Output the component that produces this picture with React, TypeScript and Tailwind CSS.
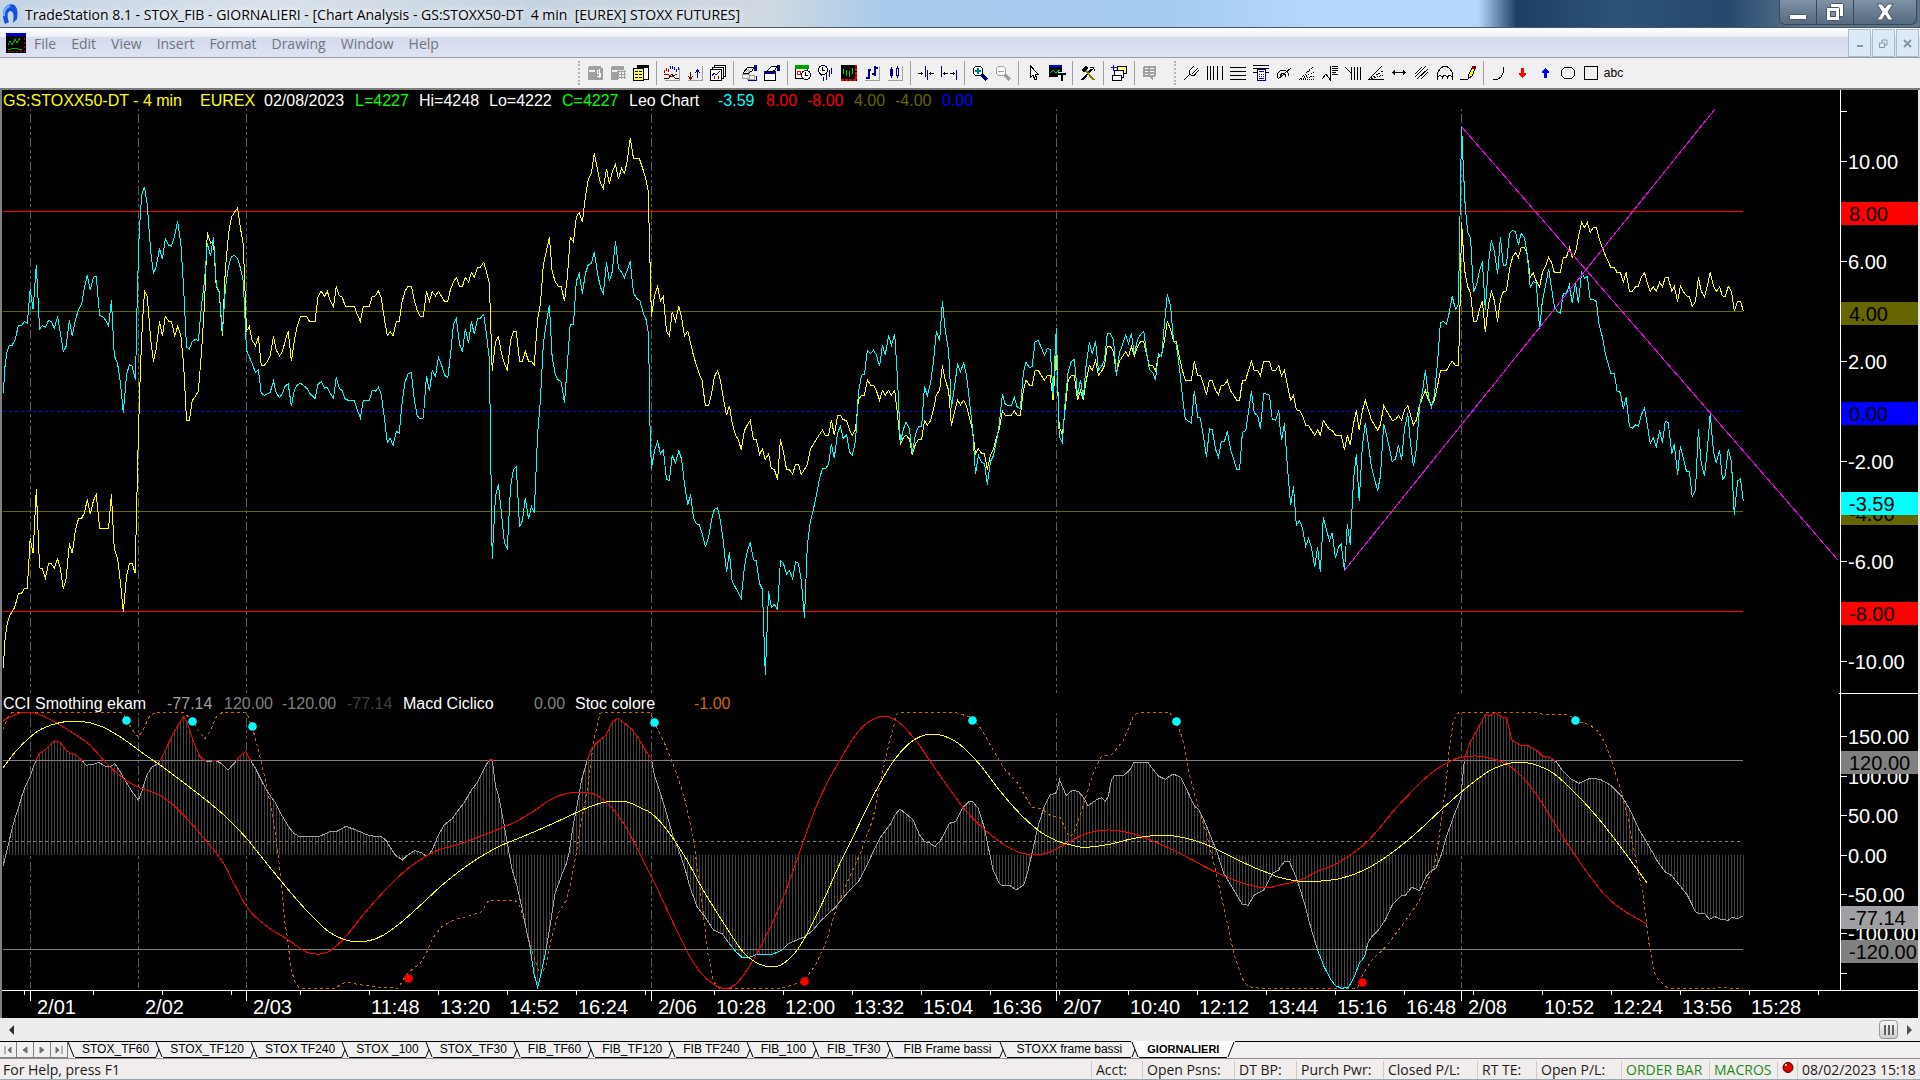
import type { ReactNode } from "react";

type Point = [number, number];

// Digitised samples come in three 640px wide sections, each on a 1568 unit grid.
const SECTION = 640;
const GRID_X = 2.45;

function read(sections: string[], top: number, gridY: number): Point[] {
    return sections.flatMap((section, i) =>
        section.trim().split(/\s+/).map((pair) => {
            const [x, y] = pair.split(",").map(Number);
            return [i * SECTION + x / GRID_X, top + y / gridY] as Point;
        })
    );
}

const toPoints = (points: Point[]) => points.map(([x, y]) => `${x.toFixed(1)},${y.toFixed(1)}`).join(" ");

// rounds the corners of sparse samples for the slow oscillators
function smooth(points: Point[]) {
    let d = `M${points[0][0]} ${points[0][1]}`;
    for (let i = 0; i < points.length - 1; i++) {
        const p0 = points[i - 1] ?? points[i];
        const p1 = points[i];
        const p2 = points[i + 1];
        const p3 = points[i + 2] ?? p2;
        d += `C${p1[0] + (p2[0] - p0[0]) / 6} ${p1[1] + (p2[1] - p0[1]) / 6} ${p2[0] - (p3[0] - p1[0]) / 6} ${p2[1] - (p3[1] - p1[1]) / 6} ${p2[0]} ${p2[1]}`;
    }
    return d;
}

const leoYellow = read([
    `8,1510 12,1440 17,1400 23,1375 30,1363 36,1352 45,1316 53,1315 60,1302 67,1302 74,1172 81,1211 89,1044 97,1249 104,1251 111,1276 119,1238 126,1238 133,1250 141,1225 148,1250 155,1303 162,1278 170,1185 177,1211 185,1150 192,1121 200,1119 207,1105 214,1070 221,1108 229,1073 236,1057 244,1145 266,1145 273,1057 280,1200 288,1225 295,1285 302,1365 310,1272 317,1238 324,1238 331,1262 339,900 344,730 349,610 354,526 361,540 369,650 376,710 383,675 391,605 398,643 405,592 413,604 420,604 428,643 435,618 443,640 450,720 457,863 464,863 471,812 479,800 486,787 494,680 501,560 508,372 516,400 523,395 530,515 537,527 545,643 552,470 560,375 567,333 574,320 582,308 589,360 596,405 604,630 611,618 618,655 626,668 633,644 640,719 648,719 655,710 662,695 670,644 677,680 685,695 692,684 699,655 706,631 714,709 721,655 728,618 736,592 751,592 758,604 772,604 779,540 787,526 795,539 802,526 809,550 817,566 824,513 831,538 838,540 846,565 868,565 875,585 883,605 890,566 905,566 912,540 920,538 927,525 934,543 942,600 949,642 956,631 963,642 971,605 978,604 985,555 992,526 1000,513 1008,513 1015,550 1022,575 1029,591 1037,591 1045,526 1052,553 1059,527 1067,538 1074,526 1082,539 1089,552 1097,552 1104,520 1111,502 1118,490 1126,513 1133,513 1140,490 1148,502 1155,477 1162,489 1170,464 1177,463 1185,450 1192,475 1199,505 1206,733 1214,658 1221,645 1229,690 1236,715 1243,733 1251,655 1258,631 1265,631 1273,709 1280,709 1287,683 1295,709 1302,709 1309,719 1317,600 1324,560 1331,458 1339,420 1346,385 1353,475 1361,502 1368,513 1375,513 1383,552 1390,490 1397,385 1405,397 1412,332 1419,320 1427,346 1434,280 1441,235 1449,218 1456,166 1464,210 1471,243 1478,258 1486,206 1493,245 1500,215 1508,193 1515,232 1523,205 1530,218 1537,185 1544,126 1552,179 1566,179`,
    `0,184 8,210 15,235 20,265 24,430 28,592 36,535 43,513 50,552 57,540 65,630 72,643 79,580 87,604 95,565 102,595 109,643 117,630 131,694 145,742 152,758 160,824 168,824 175,795 182,750 190,733 197,758 204,805 212,850 219,825 226,870 234,902 241,914 248,940 256,890 263,875 270,864 278,913 285,914 293,952 300,938 307,966 315,951 322,990 329,991 337,1018 344,913 351,944 359,991 366,992 374,1004 381,978 388,978 395,1004 403,992 410,978 417,940 425,925 432,913 447,889 454,902 462,902 469,863 476,902 484,850 491,850 498,862 506,863 513,887 520,902 528,888 535,810 543,797 550,797 557,758 565,771 572,771 579,785 587,811 594,785 601,797 609,785 616,797 624,785 631,850 638,926 645,909 652,902 660,912 667,953 675,925 682,914 690,914 697,864 704,876 712,864 719,835 726,797 734,785 741,720 748,758 756,785 763,877 770,842 778,811 785,823 793,811 800,825 807,855 815,892 822,951 829,938 837,950 844,951 851,992 859,953 866,938 873,910 880,888 888,838 895,850 910,850 917,838 924,850 932,850 939,785 946,758 954,771 961,771 968,733 976,733 983,746 991,758 998,747 1005,747 1012,811 1020,683 1027,880 1035,901 1042,830 1049,758 1057,747 1064,747 1072,811 1079,785 1086,811 1093,760 1101,720 1108,733 1116,708 1123,745 1131,735 1138,720 1145,670 1152,670 1160,683 1167,742 1175,708 1182,697 1190,684 1197,696 1204,670 1211,696 1219,670 1226,658 1234,658 1241,690 1248,720 1256,720 1263,733 1270,696 1278,694 1285,655 1292,605 1300,625 1307,657 1314,658 1322,700 1329,733 1336,758 1351,758 1358,709 1366,745 1373,746 1381,772 1388,797 1395,759 1402,759 1410,784 1417,797 1424,772 1432,771 1439,759 1447,786 1454,797 1462,811 1469,811 1476,760 1484,758 1491,732 1498,709 1505,733 1513,733 1520,746 1528,709 1542,709 1549,733 1557,733 1565,720`,
    `0,733 4,746 11,733 18,770 26,811 33,798 40,836 48,838 55,850 63,876 70,877 85,902 92,888 99,902 106,863 121,888 128,889 136,902 150,902 158,940 165,902 172,927 180,873 187,837 194,889 202,838 209,811 217,838 224,862 239,889 246,875 254,825 261,838 275,863 283,862 290,850 298,863 305,836 313,825 320,850 327,876 334,862 342,823 349,805 356,785 364,811 371,825 378,810 386,773 393,733 408,733 415,719 422,709 430,720 437,720 440,620 445,346 452,470 460,515 467,530 474,605 482,605 488,575 496,552 503,631 511,560 518,526 525,550 533,605 540,548 547,527 555,525 562,470 570,436 577,425 584,438 591,411 599,411 606,430 613,490 620,477 628,500 636,514 643,477 651,460 658,438 665,450 672,477 687,477 694,437 702,437 709,411 716,437 724,425 731,385 739,346 746,359 753,346 760,372 768,359 775,359 782,390 790,412 797,432 811,464 819,464 826,477 834,477 841,502 848,477 856,526 863,526 871,514 878,513 885,490 893,477 900,505 907,526 914,514 922,526 930,502 937,514 944,490 951,490 960,526 966,513 974,553 981,513 988,527 996,538 1003,540 1010,566 1018,553 1025,490 1032,526 1040,540 1047,513 1054,477 1062,513 1069,526 1077,515 1084,538 1091,540 1098,513 1106,526 1113,577 1121,552 1128,552 1135,577`,
], 90, 2.6133);

const leoCyan = read([
    `8,792 12,725 17,685 23,667 30,667 37,652 45,616 53,615 60,605 67,610 74,520 81,573 89,458 97,624 104,616 111,620 119,602 126,606 133,623 141,592 148,635 155,684 162,670 170,602 177,642 185,600 192,575 200,560 207,515 214,484 221,522 229,489 236,487 244,589 251,592 258,600 266,617 273,550 280,695 288,715 295,765 302,843 310,745 317,717 324,722 332,758 336,560 340,400 344,320 348,272 354,253 361,300 369,420 376,480 383,460 391,414 398,442 405,389 413,406 420,408 428,380 435,344 443,400 450,520 457,672 464,677 471,657 479,652 486,655 494,560 501,500 508,400 516,433 523,383 530,510 537,527 545,635 552,520 560,460 567,436 574,432 582,440 589,465 596,500 604,680 611,698 618,715 626,738 633,731 640,792 648,798 662,790 670,761 677,793 685,804 692,793 699,773 706,768 714,826 721,785 728,772 736,766 751,778 758,791 772,806 779,769 787,762 795,779 802,777 809,792 817,806 824,751 831,779 838,785 846,808 853,811 868,812 875,835 883,857 890,812 905,811 912,785 920,787 927,777 934,795 942,860 949,922 956,910 963,929 971,892 978,897 985,820 992,765 1000,740 1008,739 1015,810 1022,850 1029,860 1037,857 1045,747 1052,787 1059,734 1067,748 1074,699 1082,719 1089,745 1097,752 1104,690 1111,612 1118,598 1126,665 1133,684 1140,624 1148,662 1155,605 1162,638 1170,596 1177,597 1185,586 1192,640 1199,705 1206,1225 1214,1060 1221,1031 1229,1110 1236,1185 1243,1199 1251,1035 1258,992 1265,985 1273,1143 1280,1125 1287,1066 1295,1122 1302,1088 1309,1104 1317,900 1324,810 1331,665 1339,605 1346,562 1353,700 1361,745 1368,758 1375,763 1383,817 1390,720 1397,612 1405,612 1412,500 1419,480 1427,532 1434,480 1441,457 1449,453 1456,424 1464,480 1471,515 1478,532 1486,450 1493,500 1500,475 1508,396 1515,465 1523,477 1530,490 1537,470 1544,448 1552,530 1560,545 1566,549`,
    `0,551 8,583 15,600 21,640 24,860 28,990 36,940 43,917 50,951 57,940 65,1017 72,1021 79,956 87,974 95,943 102,965 109,1030 117,1085 124,1057 131,1118 138,1133 145,1136 152,1157 160,1193 168,1170 175,1125 182,1096 190,1092 197,1125 204,1180 212,1260 219,1208 226,1285 234,1300 248,1328 256,1245 263,1205 270,1182 278,1228 285,1230 293,1290 300,1305 307,1529 315,1310 322,1353 329,1344 337,1357 344,1230 351,1236 359,1265 366,1256 374,1277 381,1233 388,1236 395,1280 403,1379 410,1190 417,1130 425,1095 432,1060 440,1015 447,990 454,990 462,978 469,924 476,962 484,895 491,880 498,911 506,900 513,945 520,955 528,918 535,790 543,745 550,743 557,680 565,688 572,680 579,692 587,722 594,668 601,692 609,641 616,667 624,638 631,760 638,923 645,887 652,868 660,885 667,948 675,900 682,880 690,880 697,775 704,799 712,765 719,710 726,631 734,655 741,552 748,630 756,680 763,830 770,780 778,715 785,736 793,714 800,745 807,810 815,890 822,1003 829,955 837,973 844,976 851,1031 859,970 866,955 873,920 880,875 888,795 895,822 903,825 910,825 917,803 924,828 932,833 939,740 946,711 954,726 961,722 968,657 976,655 983,673 991,693 998,676 1005,678 1012,798 1020,622 1027,905 1035,921 1042,810 1049,735 1057,709 1064,704 1072,800 1079,757 1086,805 1093,720 1101,660 1108,690 1116,657 1123,732 1131,722 1138,706 1145,636 1152,637 1160,652 1167,746 1175,685 1182,667 1190,640 1197,662 1204,636 1211,690 1219,652 1226,640 1234,630 1241,685 1248,731 1256,738 1263,758 1270,690 1278,697 1285,610 1292,534 1300,565 1307,655 1314,665 1322,730 1329,800 1336,860 1351,870 1358,786 1366,855 1373,858 1381,910 1388,960 1395,886 1402,888 1410,938 1417,960 1424,920 1432,918 1439,892 1447,940 1454,963 1462,992 1469,992 1476,895 1484,890 1491,840 1498,786 1505,845 1513,850 1520,886 1528,793 1542,797 1549,860 1557,863 1565,837`,
    `0,880 4,915 11,870 18,980 26,1085 33,1036 40,1137 48,1125 55,1145 63,1192 70,1172 77,1195 85,1246 92,1194 99,1260 106,1117 121,1178 128,1157 136,1224 143,1195 150,1187 158,1258 165,1133 172,1188 180,1020 187,951 194,1074 202,930 209,870 217,930 224,985 239,1047 246,1010 254,873 261,900 275,971 283,964 290,929 298,967 305,885 313,845 320,925 327,983 334,940 342,825 349,790 356,733 364,803 371,830 378,800 386,710 393,608 400,605 408,612 415,580 422,539 430,573 437,560 441,330 445,95 449,200 454,310 460,372 467,388 474,528 482,508 488,475 496,448 503,574 511,450 518,393 525,420 533,482 540,385 547,460 555,456 562,375 570,367 577,370 584,405 591,375 599,386 606,430 613,516 620,501 628,503 636,625 643,550 651,510 658,467 665,515 672,565 680,580 687,583 694,532 702,530 709,510 716,557 724,505 731,557 739,477 746,492 753,487 760,548 768,548 775,553 782,615 790,645 797,690 804,715 811,742 819,741 826,787 834,790 841,833 848,803 856,879 863,884 871,875 878,879 885,850 893,831 900,875 907,923 914,909 922,933 930,890 937,922 944,866 951,869 960,950 966,926 974,1005 981,931 996,997 1003,998 1010,1063 1018,1045 1025,886 1032,975 1040,1008 1047,940 1054,847 1062,945 1069,975 1077,940 1084,1018 1091,1008 1098,939 1106,970 1113,1110 1121,1022 1128,1015 1135,1074`,
], 90, 2.6133);

const cci = read([
    `8,557 15,520 22,485 30,445 38,410 45,385 53,350 60,325 74,290 82,260 90,235 97,220 111,209 126,190 134,184 142,184 150,190 162,211 172,219 185,224 200,240 211,256 229,253 242,247 258,259 273,258 281,251 292,270 310,308 324,335 339,360 348,332 360,285 372,262 388,250 400,224 413,190 427,155 442,125 449,109 459,128 467,160 479,200 491,232 508,246 527,241 542,250 558,270 574,250 589,226 602,215 612,238 626,265 640,300 655,335 675,368 690,405 706,438 720,460 735,471 765,469 785,468 810,454 826,454 847,439 868,448 905,467 935,470 945,480 955,500 970,527 986,540 998,526 1016,512 1033,518 1045,530 1058,512 1074,465 1088,435 1108,416 1120,395 1137,368 1155,330 1168,310 1185,268 1197,242 1200,239 1206,239 1214,318 1222,350 1236,440 1243,490 1254,565 1267,620 1280,690 1290,750 1299,805 1308,880 1317,922 1326,880 1338,808 1348,735 1360,640 1378,580 1388,550 1394,520 1405,430 1412,390 1425,300 1440,235 1450,205 1464,185 1485,166 1500,127 1514,115 1530,130 1550,150 1566,178`,
    `0,182 13,210 28,236 35,285 50,340 65,400 80,465 95,510 110,565 122,620 140,680 160,712 180,750 202,762 215,785 235,815 250,832 264,834 285,824 325,823 348,810 365,790 400,772 420,755 445,720 480,680 510,635 535,605 550,570 562,540 575,505 590,470 615,430 625,405 637,387 652,402 668,418 685,465 697,485 710,489 722,500 737,480 758,430 773,425 790,385 805,365 815,364 828,385 843,440 853,500 865,570 880,610 888,618 905,616 922,629 940,615 950,575 962,510 975,440 990,380 1005,345 1020,338 1028,300 1044,346 1060,330 1075,336 1085,350 1098,377 1120,358 1131,353 1140,364 1147,350 1155,300 1163,286 1185,286 1200,270 1210,247 1244,247 1255,265 1270,288 1287,298 1306,282 1325,292 1340,330 1358,378 1370,390 1385,430 1400,475 1412,510 1430,580 1450,620 1475,672 1490,676 1505,645 1528,630 1550,580 1566,570`,
    `0,562 10,546 22,543 32,570 42,600 60,670 76,745 92,810 108,860 125,900 137,918 152,925 168,921 182,890 195,848 207,830 215,790 225,770 240,752 258,720 275,675 297,648 308,645 323,622 342,632 357,592 370,572 382,565 395,525 408,470 425,410 443,355 452,235 465,188 483,150 503,104 517,106 527,97 545,112 555,112 568,180 590,196 607,197 628,210 643,228 660,232 675,242 690,268 712,296 732,310 760,295 785,298 812,317 838,350 858,390 880,450 905,500 925,545 945,577 960,587 978,615 998,645 1018,695 1030,702 1040,700 1052,718 1065,710 1080,718 1098,721 1108,711 1120,716 1135,708`,
], 680, 3);

const macdRed = read([
    `8,122 30,108 52,98 80,98 105,108 140,130 180,160 220,195 265,255 310,302 345,325 385,342 420,370 455,412 500,475 545,545 575,615 610,690 655,740 700,775 737,806 760,820 795,820 820,802 850,765 900,690 950,622 1000,565 1045,528 1075,510 1130,490 1200,458 1260,427 1310,392 1350,358 1390,340 1430,337 1460,345 1490,372 1515,408 1535,445`,
    `0,522 40,620 80,725 120,825 150,880 180,913 210,926 235,912 265,865 300,790 340,685 370,590 400,485 430,385 460,305 490,240 520,180 550,135 580,113 598,109 620,116 650,145 680,188 720,260 760,330 800,395 850,455 900,500 940,521 980,524 1015,510 1060,480 1100,458 1150,450 1210,462 1270,490 1330,525 1400,570 1460,602 1510,620 1540,623`,
    `0,615 50,600 90,575 140,550 200,500 240,450 280,390 320,338 360,290 400,255 440,233 480,228 520,236 560,256 600,300 640,365 680,445 720,520 760,590 800,650 840,690 900,733`,
], 680, 3);

const macdYellow = read([
    `8,262 40,212 75,170 105,145 150,127 200,124 250,140 300,175 350,220 400,262 450,308 510,365 560,418 604,475 650,545 700,620 750,690 800,750 840,777 870,785 905,782 940,765 985,725 1035,670 1090,608 1150,552 1210,507 1250,485 1300,460 1370,422 1430,388 1475,368 1510,364 1540,367`,
    `0,383 28,400 60,440 110,530 150,620 200,720 250,812 285,848 318,860 345,855 380,818 410,760 450,660 490,550 530,450 570,350 620,245 660,190 690,168 715,163 745,168 780,190 830,250 880,330 930,400 980,455 1020,482 1060,496 1090,502 1150,493 1210,475 1270,466 1320,470 1380,490 1440,525 1500,560 1545,582`,
    `0,593 50,604 90,604 150,595 210,568 270,522 330,463 390,395 450,330 510,275 555,252 590,247 625,254 670,280 720,335 780,415 840,510 900,610`,
], 680, 3);

const stoc = read([
    `8,148 18,115 28,99 300,97 308,115 325,150 339,172 352,145 368,105 385,97 450,97 470,120 485,150 502,176 515,155 530,110 545,97 604,97 620,150 635,220 650,300 662,370 672,440 682,530 690,620 697,720 705,780 712,860 722,905 735,926 820,924 848,906 880,914 930,922 975,925 998,880 1030,850 1048,810 1060,775 1082,740 1115,718 1150,708 1180,695 1198,660 1260,660 1272,672 1285,725 1300,800 1318,868 1325,884 1340,850 1350,780 1368,700 1388,660 1400,600 1412,520 1425,420 1440,320 1455,180 1470,100 1480,97 1566,97`,
    `0,97 25,98 36,130 60,190 90,280 110,360 130,470 142,580 155,700 165,810 180,905 195,926 345,925 400,905 430,855 455,790 480,690 510,600 540,520 570,420 590,300 610,190 630,100 640,97 770,97 812,112 835,145 865,210 890,262 925,310 960,382 985,387 1005,407 1030,412 1050,470 1062,462 1080,400 1095,340 1110,280 1130,230 1155,225 1185,180 1210,105 1225,97 1295,97 1312,115 1330,180 1345,280 1365,370 1390,470 1410,570 1430,680 1455,820 1475,895 1490,920 1520,925 1566,925`,
    `0,926 190,925 202,885 225,840 260,800 300,735 340,665 380,550 392,450 405,330 415,200 425,120 438,97 630,97 650,105 705,103 730,124 760,135 780,155 797,190 812,240 835,330 855,430 872,540 890,650 905,800 920,890 950,925 1060,925 1080,922 1100,925 1135,925`,
], 680, 3);

const CCI_ZERO = 855;
const CCI_HIGH = 760;
const CCI_LOW = 949;

function valueAt(points: Point[], x: number) {
    const i = points.findIndex((p) => p[0] >= x);
    if (i < 1) return points[i === 0 ? 0 : points.length - 1][1];
    const [x0, y0] = points[i - 1];
    const [x1, y1] = points[i];
    return y0 + ((y1 - y0) * (x - x0)) / (x1 - x0);
}

const bars = Array.from({ length: 581 }, (_, i) => 3 + i * 3)
    .map((x) => `M${x + 0.5} ${CCI_ZERO}V${valueAt(cci, x).toFixed(1)}`)
    .join("");

const sessions = [30, 138, 246, 651, 1056, 1461];
const longTicks = [30, 246, 651, 1056, 1461];

const timeLabels: [number, string][] = [
    [37, "2/01"], [145, "2/02"], [253, "2/03"], [371, "11:48"], [440, "13:20"], [509, "14:52"], [578, "16:24"],
    [658, "2/06"], [716, "10:28"], [785, "12:00"], [854, "13:32"], [923, "15:04"], [992, "16:36"],
    [1063, "2/07"], [1130, "10:40"], [1199, "12:12"], [1268, "13:44"], [1337, "15:16"], [1406, "16:48"],
    [1468, "2/08"], [1544, "10:52"], [1613, "12:24"], [1682, "13:56"], [1751, "15:28"],
];

const priceLabels: [number, string][] = [
    [161, "10.00"], [261, "6.00"], [361, "2.00"], [461, "-2.00"], [561, "-6.00"], [661, "-10.00"],
    [736, "150.00"], [776, "100.00"], [815, "50.00"], [855, "0.00"], [894, "-50.00"], [933, "-100.00"],
];

const priceTags: { y: number; label: string; fill: string }[] = [
    { y: 202, label: "8.00", fill: "#ff0000" },
    { y: 302, label: "4.00", fill: "#666600" },
    { y: 402, label: "0.00", fill: "#0000ff" },
    { y: 502, label: "-4.00", fill: "#666600" },
    { y: 492, label: "-3.59", fill: "#00ffff" },
    { y: 602, label: "-8.00", fill: "#ff0000" },
    { y: 751, label: "120.00", fill: "#808080" },
    { y: 940, label: "-120.00", fill: "#808080" },
    { y: 906, label: "-77.14", fill: "#a0a0a4" },
];

const signals: [number, number, string][] = [
    [126, 720, "#00ffff"], [192, 721, "#00ffff"], [252, 726, "#00ffff"], [654, 722, "#00ffff"], [972, 720, "#00ffff"],
    [1176, 721, "#00ffff"], [1575, 720, "#00ffff"], [408, 978, "#ff0000"], [804, 981, "#ff0000"], [1362, 982, "#ff0000"],
];

function Chart() {
    return (
        <svg viewBox="2 90 1916 928" className="block h-auto w-full" shapeRendering="crispEdges" fill="none" role="img" aria-label="STOXX50 4 minute chart">
            <defs>
                <clipPath id="overbought"><rect x="0" y="690" width="1920" height={CCI_HIGH + 1 - 690} /></clipPath>
                <clipPath id="neutral"><rect x="0" y={CCI_HIGH + 1} width="1920" height={CCI_LOW - CCI_HIGH - 1} /></clipPath>
                <clipPath id="oversold"><rect x="0" y={CCI_LOW} width="1920" height="60" /></clipPath>
            </defs>
            <g stroke="#5a5a5a" strokeDasharray="9 3 3 3 3 3" strokeDashoffset="19">
                {sessions.map((x) => (
                    <path key={x} d={`M${x + 0.5} 109V693M${x + 0.5} 713V988`} />
                ))}
            </g>

            <path d="M3 211.5H1743M3 611.5H1743" stroke="#ff0000" />
            <path d="M3 311.5H1743M3 511.5H1743" stroke="#666600" />
            <path d="M3 411.5H1743" stroke="#0000ff" strokeDasharray="3 3" />
            <polyline points={toPoints(leoYellow)} stroke="#ffff00" />
            <polyline points={toPoints(leoCyan)} stroke="#00ffff" />
            <path d="M1461 126L1838 560M1344 571L1715 109" stroke="#ff00ff" />

            <path d={bars} stroke="#404040" />
            <path d="M3 760.5H1743M3 949.5H1743" stroke="#808080" />
            <path d="M3 841.5H1743" stroke="#808080" strokeDasharray="3 3" />
            <polyline points={toPoints(stoc)} stroke="#cc6600" strokeDasharray="3 3" />
            <polyline points={toPoints(cci)} stroke="#a0a0a4" clipPath="url(#neutral)" />
            <polyline points={toPoints(cci)} stroke="#ff0000" clipPath="url(#overbought)" />
            <polyline points={toPoints(cci)} stroke="#00ffff" clipPath="url(#oversold)" />
            <path d={smooth(macdRed)} stroke="#ff0000" />
            <path d={smooth(macdYellow)} stroke="#ffff00" />
            <g shapeRendering="geometricPrecision">
                {signals.map(([x, y, color]) => (
                    <circle key={x} cx={x + 0.5} cy={y + 0.5} r="4.3" fill={color} />
                ))}
            </g>

            <g stroke="#ffffff">
                <path d="M1840.5 90V990M1839 693.5H1918M2 990.5H1918M1841 111.5H1847M1841 973.5H1847" />
                {priceLabels.map(([y]) => (
                    <path key={y} d={`M1841 ${y + 0.5}H1847`} />
                ))}
                {Array.from({ length: 27 }, (_, i) => (
                    <path key={i} d={`M${24.5 + i * 69} 991V995`} />
                ))}
                {longTicks.map((x) => (
                    <path key={x} d={`M${x + 0.5} 991V1001`} />
                ))}
            </g>
            <g fill="#ffffff" className="text-[20px]">
                {timeLabels.map(([x, label]) => (
                    <text key={x} x={x} y="1014">{label}</text>
                ))}
                {priceLabels.map(([y, label]) => (
                    <text key={y} x="1848" y={y + 8}>{label}</text>
                ))}
            </g>
            {priceTags.map((tag) => (
                <g key={tag.label} className="text-[20px]">
                    <rect x="1841" y={tag.y} width="77" height="23" fill={tag.fill} />
                    <text x="1849" y={tag.y + 19} fill="#000000">{tag.label}</text>
                </g>
            ))}
        </svg>
    );
}

function PriceLegend() {
    return (
        <div className="absolute top-0 left-0 flex pl-px text-[16px] leading-[21px] whitespace-pre text-white">
            <span className="w-[197px] text-[#ffff00]">GS:STOXX50-DT - 4 min</span>
            <span className="w-16 text-[#ffff00]">EUREX</span>
            <span className="w-[91px]">02/08/2023</span>
            <span className="w-16 text-[#00ff00]">L=4227</span>
            <span className="w-[70px]">Hi=4248</span>
            <span className="w-[73px]">Lo=4222</span>
            <span className="w-[67px] text-[#00ff00]">C=4227</span>
            <span className="w-[89px]">Leo Chart</span>
            <span className="w-12 text-[#00ffff]">-3.59</span>
            <span className="w-[41px] text-[#ff0000]">8.00</span>
            <span className="w-[47px] text-[#ff0000]">-8.00</span>
            <span className="w-[41px] text-[#666600]">4.00</span>
            <span className="w-[47px] text-[#666600]">-4.00</span>
            <span className="text-[#0000ff]">0.00</span>
        </div>
    );
}

function CciLegend() {
    return (
        <div className="absolute top-[65%] left-0 flex pl-px text-[16px] leading-[21px] whitespace-pre text-white">
            <span className="w-[164px]">CCI Smothing ekam</span>
            <span className="w-[57px] text-[#a0a0a4]">-77.14</span>
            <span className="w-[58px] text-[#808080]">120.00</span>
            <span className="w-[65px] text-[#808080]">-120.00</span>
            <span className="w-14 text-[#404040]">-77.14</span>
            <span className="w-[131px]">Macd Ciclico</span>
            <span className="w-[41px] text-[#808080]">0.00</span>
            <span className="w-[119px]">Stoc colore</span>
            <span className="text-[#cc6600]">-1.00</span>
        </div>
    );
}

const ink = "#000000";
const navy = "#000080";
const shade = "#a0a0a0";

type Tool = { name: string; art: ReactNode };

const page = (
    <>
        <path d="M2 1.5H13M1.5 2V15" stroke={shade} />
        <rect x="2" y="1" width="12" height="4" fill={shade} />
        <rect x="1" y="7" width="8" height="8" rx="3" fill={shade} />
    </>
);

const chartTools: (Tool | null)[] = [
    { name: "Symbol price", art: <>{page}<path d="M8 3H16V15H8Z" fill={shade} /><path d="M13 5.5H10.5V8.5H13.5V11.5H10M12 4V13" stroke="#ffffff" /></> },
    { name: "Symbol table", art: <>{page}<path d="M7 6.5H16M7 9.5H16M7 12.5H16M8.5 5V14M11.5 5V14M14.5 5V14" stroke={shade} /></> },
    { name: "Data window", art: <><rect x="4.5" y="0.5" width="11" height="14" fill="#fff" stroke={ink} /><rect x="4" y="0" width="12" height="3" fill={ink} /><rect x="0.5" y="3.5" width="10" height="12" fill="#ffff66" stroke={ink} /><path d="M2 6.5H5M6 6.5H9M2 9.5H5M6 9.5H9M2 12.5H5M6 12.5H9" stroke={ink} /></> },
    null,
    { name: "Indicator", art: <><path d="M1 15.5H15.5V3" stroke={shade} /><path d="M.5 5V8M2.5 3V6M4.5 4V7" stroke="#c00000" /><path d="M6.5 1V4M8.5 1V4M10.5 2V5M12.5 4V7M14.5 2V5" stroke="#0000c0" /><path d="M0 13L4 14L8 9L11 13L15 14" stroke={ink} /><path d="M0 10L4 9L8 12L13 9" stroke="#a00000" /></> },
    { name: "Up and down", art: <><path d="M1 15.5H15.5V1" stroke={shade} /><path d="M3.5 7V14M1 11L3.5 14L6 11" stroke="#800000" /><path d="M10.5 13V5M8 8L10.5 5L13 8" stroke={navy} /></> },
    { name: "Cascade", art: <><path d="M4.5 3V.5H15.5V11H13" fill="#fff" stroke={ink} /><path d="M2.5 5V2.5H13.5V13H11" fill="#fff" stroke={ink} /><rect x=".5" y="4.5" width="11" height="11" fill="#fff" stroke={ink} /><path d="M2 11L4 8L6 10L10 6" stroke="#0000ff" /><path d="M4.5 11V14M8.5 11V14" stroke="#a00000" /></> },
    null,
    { name: "Format symbol", art: <><path d="M2 8L7 2H13L11 6L6 9Z" fill="#fff" stroke={ink} /><path d="M5 7L8 4M7 8L10 4" stroke={shade} /><path d="M13 0H16V6H13Z" fill={navy} /><path d="M1.5 9.5H8.5V13.5H1.5ZM9 10.5H13.5V14.5H6" stroke={shade} /><path d="M7 15.5H15.5V11" stroke={navy} /></> },
    { name: "Format window", art: <><rect x=".5" y="6.5" width="11" height="9" fill="#fff" stroke={ink} /><rect x="0" y="6" width="12" height="3" fill={navy} /><path d="M3 6L8 1H13L11 5L7 7Z" fill="#fff" stroke={ink} /><path d="M13 0H16V6H13Z" fill={navy} /></> },
    null,
    { name: "Session", art: <><rect x=".5" y="1.5" width="12" height="12" fill="#fff" stroke={ink} /><rect x="0" y="0" width="14" height="4" fill="#00a000" /><path d="M2.5 6.5H5.5V9.5H2.5Z" stroke="#ff0000" /><circle cx="11" cy="10" r="4.5" fill="#fff" stroke={ink} /><path d="M10.5 7V10.5H13" stroke={ink} /></> },
    { name: "Interval", art: <><circle cx="5" cy="5" r="4.5" fill="#fff" stroke={ink} /><path d="M4.5 2V5.5H7M1 8L4 11" stroke={ink} /><path d="M5.5 12V16M8.5 9V15M11.5 5V12M13.5 3V9" stroke={navy} /></> },
    { name: "Chart style", art: <><rect width="16" height="16" fill={ink} /><path d="M0 15H15V0" stroke="#ff0000" strokeWidth="2" strokeDasharray="3 1" /><path d="M2.5 4V9M5.5 5V11M8.5 6V12M11.5 3V9" stroke="#00e000" /></> },
    { name: "Bar chart", art: <><path d="M1 15.5H15.5V1" stroke={shade} /><path d="M5 4V14M2 13H5M5 5H7M11 1V11M8 9H11M11 3H14" stroke={navy} strokeWidth="2" /></> },
    { name: "Candlestick", art: <><path d="M1 15.5H15.5V1" stroke={shade} /><path d="M4.5 2V13M10.5 1V13" stroke={navy} /><rect x="3" y="4" width="3" height="7" fill={navy} /><rect x="9.5" y="3.5" width="2" height="7" fill="#fff" stroke={navy} /></> },
    null,
    { name: "Decrease spacing", art: <><path d="M7.5 1V12M9.5 5V15" stroke={navy} /><path d="M0 8.5H5M3.5 7V10M11 8.5H16M12.5 7V10" stroke={ink} /></> },
    { name: "Increase spacing", art: <><path d="M.5 1V12M15.5 5V15" stroke={navy} /><path d="M2 8.5H7M3.5 7V10M9 8.5H14M12.5 7V10" stroke={ink} /></> },
    null,
    { name: "Zoom in", art: <><circle cx="6" cy="6" r="5" fill="#fff" stroke={ink} /><path d="M3 6H9M6 3V9" stroke="#008080" strokeWidth="2" /><path d="M10 10L15 15" stroke={navy} strokeWidth="3" /></> },
    { name: "Zoom out", art: <><circle cx="6" cy="6" r="5" fill="#fff" stroke={shade} /><path d="M3 6.5H9" stroke={shade} /><path d="M10 10L15 15" stroke={shade} strokeWidth="3" /></> },
    null,
    { name: "Pointer", art: <path d="M4.5 1V12L7 10L9 15L11 14L9 9H12Z" fill="#fff" stroke={ink} /> },
    { name: "Text pointer", art: <><rect width="13" height="12" fill={ink} /><rect width="13" height="2" fill="#0000ff" /><path d="M1 8L4 5L7 8L11 5" stroke="#00e000" /><rect x="9" y="7" width="8" height="9" fill="#efefef" /><path d="M9 9H17M13 8V16" stroke={ink} strokeWidth="2" /></> },
    null,
    { name: "Build", art: <><path d="M2 15L12 4" stroke={ink} strokeWidth="2" /><path d="M14 15L5 5" stroke="#808000" strokeWidth="2" /><path d="M1 5L6 1L8 3L4 7Z" fill={ink} /><path d="M10 2H13L15 6" stroke={ink} /></> },
    null,
    { name: "New workspace", art: <><rect x="6.5" y="1.5" width="9" height="7" fill="#ffff66" stroke={ink} /><rect x="3.5" y="5.5" width="9" height="7" fill="#fff" stroke={navy} /><rect x="1.5" y="10.5" width="9" height="5" fill="#fff" stroke={ink} /><path d="M0 2.5H6M2.5 0V6" stroke="#0000ff" /></> },
    null,
    { name: "Message log", art: <><rect x="1" y="1" width="13" height="11" rx="2" fill={shade} /><path d="M7 12L11 16V11Z" fill={shade} /><path d="M3 3.5H6M8 3.5H12M3 6.5H6M8 6.5H12M3 9.5H6M8 9.5H12" stroke="#fff" /></> },
];

const drawingTools: (Tool | null)[] = [
    { name: "Andrews pitchfork", art: <path d="M0 15L6 9M5.5 5V9L8 10.5H10M5 6L10 1M8 9L14 3M10 10.5L15 5" stroke={ink} /> },
    { name: "Fibonacci time", art: <path d="M.5 1V15M3.5 1V15M6.5 1V15M10.5 1V15M15.5 1V15" stroke={ink} /> },
    { name: "Horizontal grid", art: <path d="M0 2.5H16M0 6.5H16M0 10.5H16M0 14.5H16" stroke={ink} /> },
    { name: "Speed resistance", art: <><path d="M0 .5H16M0 3.5H16M0 7.5H4M12 7.5H16" stroke={ink} /><rect x="4.5" y="4.5" width="8" height="11" fill="#fff" stroke={navy} /><path d="M6 6.5H11M6 9.5H7M8 9.5H9M10 9.5H11M6 11.5H7M8 11.5H9M10 11.5H11M6 13.5H11" stroke="#0000ff" /></> },
    { name: "Arcs", art: <path d="M1 13C1 4 11 2 13 11M4 13C4 8 9 6 10 12M2 14L15 3" stroke={ink} /> },
    { name: "Gann fan", art: <path d="M0 15L15 1M0 15L15 7M0 15L15 11M0 14.5H16" stroke={ink} strokeDasharray="1 1" /> },
    { name: "Price retracement", art: <path d="M0 14L4 9L6 12L8.5 15V1M10 1.5H16M10 3.5H16M10 5.5H16M10 7.5H14M10 9.5H16" stroke={ink} /> },
    { name: "Time lines", art: <path d="M0 2L6 8M6.5 2V15M9.5 2V15M12.5 2V15M15.5 2V15" stroke={ink} /> },
    { name: "Fan lines", art: <><path d="M0 15L14 1M0 14.5H16" stroke={ink} /><path d="M0 15L15 6M0 15L15 10" stroke={ink} strokeDasharray="2 1" /></> },
    { name: "Horizontal segment", art: <><path d="M1 7.5H15" stroke={ink} /><path d="M1 7.5L4 5V10ZM15 7.5L12 5V10Z" fill={ink} /></> },
    { name: "Parallel lines", art: <path d="M1 12L12 1M3 14L14 4M1 9L8 2M7 14L14 7" stroke={ink} /> },
    { name: "Cycle", art: <path d="M.5 15V8L3 4L6 1.5H10L13 4L15.5 8V15M1 12L3 10L5 12V14M5 12L8 10L10 12V14M10 12L13 10L15 12" stroke={ink} /> },
    { name: "Pencil", art: <><path d="M0 14.5H8" stroke={ink} /><path d="M8 14L9 9L12 3L15 4L12 11Z" fill="#ffff00" stroke={ink} /><rect x="12" y="1" width="4" height="3" fill="#800000" /></> },
    null,
    { name: "Arc", art: <path d="M2 14.5H6L10 12L12 8L13 2" stroke={ink} /> },
    { name: "Down arrow", art: <path d="M7 3H10V8H12V10L8.5 13L5 10V8H7Z" fill="#ff0000" /> },
    { name: "Up arrow", art: <path d="M7 13H10V8H12V6L8.5 3L5 6V8H7Z" fill="#0000ff" /> },
    { name: "Ellipse", art: <ellipse cx="8" cy="8" rx="7" ry="6" stroke={ink} /> },
    { name: "Rectangle", art: <rect x="1.5" y="1.5" width="13" height="13" stroke={ink} /> },
];

function ToolGroup({ tools }: { tools: (Tool | null)[] }) {
    return (
        <>
            {tools.map((tool, i) =>
                tool ? (
                    <button key={tool.name} type="button" aria-label={tool.name} className="flex h-6 w-[23px] items-center justify-center">
                        <svg width="16" height="16" viewBox="0 0 16 16" fill="none" shapeRendering="crispEdges" className="overflow-visible">{tool.art}</svg>
                    </button>
                ) : (
                    <span key={i} className="flex h-6 w-2 justify-center"><span className="w-px bg-[#a0a0a0]" /></span>
                )
            )}
        </>
    );
}

function Grip() {
    return <span className="h-6 w-0 border-l-2 border-dotted border-[#b4b4b4]" />;
}

function TitleBar() {
    return (
        <header className="flex h-7 items-center border-b border-[#4a5866] bg-[linear-gradient(90deg,#c3d3e4_0%,#d9e2ec_14%,#c5d3e0_28%,#d0d9e2_40%,#a9cbec_46%,#a5cbf0_60%,#b4d7fc_68%,#b4d7fc_77%,#1d3f66_79%,#2c5278_84%,#26496d_90%,#5b7690_94%,#5a748e_100%)] pl-px">
            <svg width="20" height="24" viewBox="0 0 20 24" aria-hidden="true">
                <path d="M4 22C1 15 1 6 7 3C14 0 18 6 16 17L12 21C13 14 13 9 9 9C6 10 6 15 8 20Z" fill="#1450d8" />
                <path d="M3 14C3 8 5 5 9 4" stroke="#6fb2ff" strokeWidth="2" fill="none" />
            </svg>
            <h1 className="ml-1 pt-0.5 text-[14px] whitespace-pre text-black [text-shadow:0_0_6px_#fff,0_0_10px_#fff]">TradeStation 8.1 - STOX_FIB - GIORNALIERI - [Chart Analysis - GS:STOXX50-DT  4 min  [EUREX] STOXX FUTURES]</h1>
            <div className="mr-[3px] ml-auto flex h-[25px] self-start rounded-b-md border border-t-0 border-[#3a4856] bg-gradient-to-b from-[#7f92a6] to-[#55697f]">
                <button type="button" aria-label="Minimize" className="flex w-[37px] justify-center border-r border-[#3a4856]">
                    <svg width="20" height="24"><rect x="1.5" y="14.5" width="17" height="5" rx="1" fill="#fff" stroke="#4a5866" /></svg>
                </button>
                <button type="button" aria-label="Restore" className="flex w-[37px] justify-center border-r border-[#3a4856]">
                    <svg width="20" height="24" fill="#fff" stroke="#4a5866"><rect x="5.5" y="3.5" width="13" height="13" rx="1" /><rect x="1.5" y="7.5" width="13" height="13" rx="1" /><rect x="5.5" y="11.5" width="5" height="5" fill="#7f92a6" /></svg>
                </button>
                <button type="button" aria-label="Close" className="flex w-[62px] justify-center">
                    <svg width="20" height="24"><path d="M2 4H7L10 8L13 4H18L13 12L18 20H13L10 15L7 20H2L7 12Z" fill="#fff" stroke="#4a5866" /></svg>
                </button>
            </div>
        </header>
    );
}

const menus = ["File", "Edit", "View", "Insert", "Format", "Drawing", "Window", "Help"];

function MenuBar() {
    return (
        <nav className="flex h-[30px] items-center border-b border-[#9a9ea8] bg-[linear-gradient(180deg,#ffffff_0%,#eff1f8_28%,#d5dbec_34%,#dde3f3_100%)] pl-[6px]">
            <svg width="20" height="20" viewBox="0 0 20 20" shapeRendering="crispEdges" fill="none" aria-hidden="true">
                <rect width="20" height="20" fill="#000" />
                <rect width="20" height="3" fill="#0000c8" />
                <path d="M2 12L4 8L6 12L9 6L11 10L14 5M2 17L8 15L16 17" stroke="#00b000" />
                <path d="M2 18.5H18.5V5" stroke="#c00000" strokeDasharray="2 2" />
            </svg>
            <div className="ml-2 flex gap-[15px] pt-0.5 text-[14px] text-[#70757e]">
                {menus.map((menu) => (
                    <button key={menu} type="button">{menu}</button>
                ))}
            </div>
            <div className="ml-auto flex gap-px self-stretch pt-px pr-px text-[#8497ab]">
                <button type="button" aria-label="Minimize chart" className="flex w-[23px] items-center justify-center border border-[#a9bccd] bg-[#dceaf7]">
                    <svg width="9" height="9"><rect x="2" y="6" width="6" height="2" fill="currentColor" /></svg>
                </button>
                <button type="button" aria-label="Restore chart" className="flex w-[23px] items-center justify-center border border-[#a9bccd] bg-[#dceaf7]">
                    <svg width="9" height="9" fill="none" stroke="currentColor"><path d="M3 3.5V1H8V6H6M.5 4H5.5V8.5H.5Z" /></svg>
                </button>
                <button type="button" aria-label="Close chart" className="flex w-[23px] items-center justify-center border border-[#a9bccd] bg-[#dceaf7]">
                    <svg width="9" height="9" stroke="currentColor" strokeWidth="2"><path d="M1 1L8 8M8 1L1 8" /></svg>
                </button>
            </div>
        </nav>
    );
}

function Toolbar() {
    return (
        <div className="flex h-8 items-center border-b-2 border-[#7c7c7c] bg-[#f0f0f0] pl-[578px]">
            <Grip />
            <div className="ml-[3px] flex"><ToolGroup tools={chartTools} /></div>
            <span className="w-[13px]" />
            <Grip />
            <div className="ml-1 flex">
                <ToolGroup tools={drawingTools} />
                <button type="button" className="w-[23px] font-['Liberation_Sans',Arial,sans-serif] text-[12px] leading-6 text-black">abc</button>
            </div>
        </div>
    );
}

function ScrollBar() {
    return (
        <div className="flex h-[23px] items-center bg-[#ededed] pr-2 pl-[9px]">
            <button type="button" aria-label="Scroll left"><svg width="6" height="10" className="block"><path d="M5 0V10L0 5Z" fill="#303030" /></svg></button>
            <button type="button" aria-label="Scroll position" className="ml-auto flex h-[19px] w-[19px] items-center justify-center gap-[2px] rounded-sm border border-[#979797] bg-gradient-to-b from-[#f6f6f6] to-[#cfcfcf]">
                <span className="h-[10px] w-[2px] bg-[#606060]" />
                <span className="h-[10px] w-[2px] bg-[#606060]" />
                <span className="h-[10px] w-[2px] bg-[#606060]" />
            </button>
            <button type="button" aria-label="Scroll right" className="ml-2"><svg width="6" height="10" className="block"><path d="M1 0V10L6 5Z" fill="#505050" /></svg></button>
        </div>
    );
}

const tabs = ["STOX_TF60", "STOX_TF120", "STOX TF240", "STOX _100", "STOX_TF30", "FIB_TF60", "FIB_TF120", "FIB TF240", "FIB_100", "FIB_TF30"];
const wideTabs = ["FIB Frame bassi", "STOXX frame bassi"];

const steps: [string, string][] = [
    ["First tab", "M2 1V9M8 2V8L5 5Z"],
    ["Previous tab", "M7 2V8L3 5Z"],
    ["Next tab", "M3 2V8L7 5Z"],
    ["Last tab", "M2 2V8L5 5ZM8 1V9"],
];

function Tab({ label, first = false, wide = false }: { label: string; first?: boolean; wide?: boolean }) {
    return (
        <div className="-ml-px flex">
            <svg width="8" height="17" fill="none" stroke="#000">
                <path d={first ? "M0 .5H8M1 1L7 16" : "M0 .5H8M1 1L7 16M1 16L4 8.5"} />
            </svg>
            <button type="button" className={`border-y border-black leading-[15px] ${wide ? "px-[9px]" : "px-[7px]"}`}>{label}</button>
        </div>
    );
}

function WorkspaceTabs() {
    return (
        <div className="flex h-[18px] items-stretch border-b border-[#8c8c8c] bg-[#f0f0f0] text-[12px] leading-4 text-black">
            <div className="flex border-t border-black">
                {steps.map(([name, d]) => (
                    <button key={name} type="button" aria-label={name} className="flex w-[17px] items-center justify-center border-r border-b border-[#808080]">
                        <svg width="10" height="10"><path d={d} fill="#707070" stroke="#707070" /></svg>
                    </button>
                ))}
            </div>
            {tabs.map((tab, i) => <Tab key={tab} label={tab} first={i === 0} />)}
            {wideTabs.map((tab) => <Tab key={tab} label={tab} wide />)}
            <div className="flex">
                <svg width="8" height="17" fill="none" stroke="#000"><path d="M1 0H8V16H7Z" fill="#fff" stroke="none" /><path d="M1 1L7 16M1 16L4 8.5" /></svg>
                <button type="button" aria-current="page" className="border-b border-black bg-white px-2 text-[11px] font-bold">GIORNALIERI</button>
                <svg width="8" height="17" fill="none" stroke="#000"><path d="M0 0H7L1 16H0Z" fill="#fff" stroke="none" /><path d="M7 1L1 16" /></svg>
            </div>
            <div className="flex-1 border-t border-black" />
        </div>
    );
}

function StatusBar() {
    return (
        <footer className="flex h-[21px] items-center border-b border-[#8fa9b5] bg-[#f1eded] pt-0.5 pl-[3px] text-[14px] leading-[18px] whitespace-nowrap text-[#1a1a1a]">
            <span>For Help, press F1</span>
            <div className="ml-auto flex *:border-l *:border-[#cfcaca] *:pl-1">
                <span className="w-[51px] border-l-0">Acct:</span>
                <span className="w-[92px]">Open Psns:</span>
                <span className="w-[62px]">DT BP:</span>
                <span className="w-[87px]">Purch Pwr:</span>
                <span className="w-[94px]">Closed P/L:</span>
                <span className="w-[59px]">RT TE:</span>
                <span className="w-[85px]">Open P/L:</span>
                <button type="button" className="w-[88px] text-left text-[#1e8a1e]">ORDER BAR</button>
                <button type="button" className="w-[68px] text-left text-[#1e8a1e]">MACROS</button>
                <span className="w-5">
                    <svg width="12" height="13" viewBox="0 0 12 13"><circle cx="6" cy="6.5" r="5" fill="#e00000" stroke="#400000" /><circle cx="4" cy="4" r="1" fill="#fff" /></svg>
                </span>
                <span className="w-[123px]">08/02/2023 15:18</span>
            </div>
        </footer>
    );
}

export default function App() {
    return (
        <div className="min-h-screen w-full overflow-hidden bg-[#f0f0f0] font-['Open_Sans','Noto_Sans',sans-serif]">
            <TitleBar />
            <MenuBar />
            <Toolbar />
            <main className="font-['Liberation_Sans',Arial,sans-serif]">
                <div className="relative border-x-2 border-l-[#808080] border-r-[#e8e8e8] bg-black">
                    <Chart />
                    <PriceLegend />
                    <CciLegend />
                </div>
                <ScrollBar />
                <WorkspaceTabs />
            </main>
            <StatusBar />
        </div>
    );
}
